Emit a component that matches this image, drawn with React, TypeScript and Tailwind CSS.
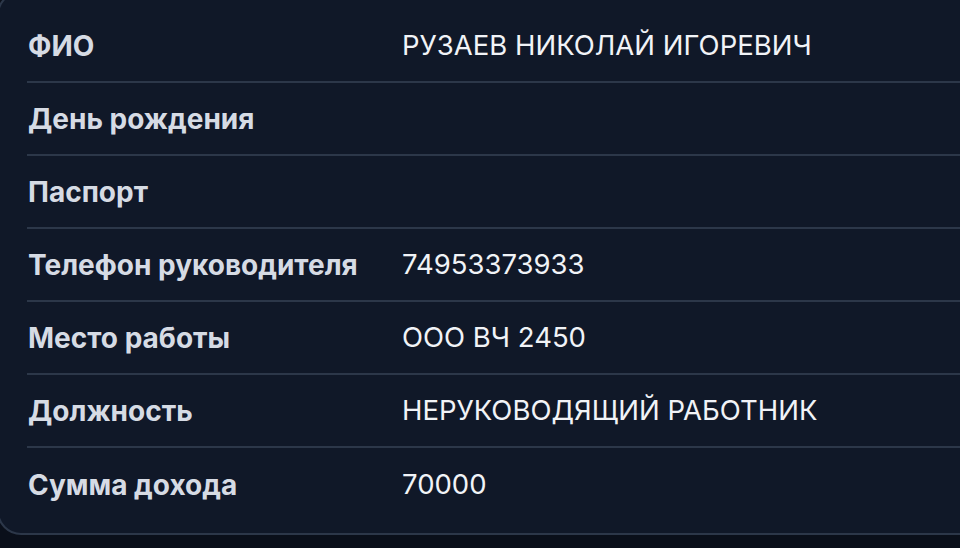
const rows: [string, string][] = [
  ["ФИО", "РУЗАЕВ НИКОЛАЙ ИГОРЕВИЧ"],
  ["День рождения", ""],
  ["Паспорт", ""],
  ["Телефон руководителя", "74953373933"],
  ["Место работы", "ООО ВЧ 2450"],
  ["Должность", "НЕРУКОВОДЯЩИЙ РАБОТНИК"],
  ["Сумма дохода", "70000"],
];

export default function App() {
  return (
    <div className="w-[960px] h-[548px] overflow-hidden bg-[#0a0f1a] font-['Inter',sans-serif]">
      <div className="-mt-[9px] -ml-[3px] w-[1000px] rounded-[24px] border-2 border-[#2c3749] bg-[#101828] pt-[17px] pb-[12px] pl-[28px]">
        {rows.map(([label, value], i) => (
          <div
            key={label}
            className={`grid grid-cols-[375px_1fr] items-center h-[73px] ${i < rows.length - 1 ? "border-b-2 border-[#2c3749]" : ""}`}
          >
            <div className="text-[28px] font-bold text-[#d6dbe4] pl-[1px]">{label}</div>
            <div className="text-[27.5px] text-[#f1f3f7]">{value}</div>
          </div>
        ))}
      </div>
    </div>
  );
}
